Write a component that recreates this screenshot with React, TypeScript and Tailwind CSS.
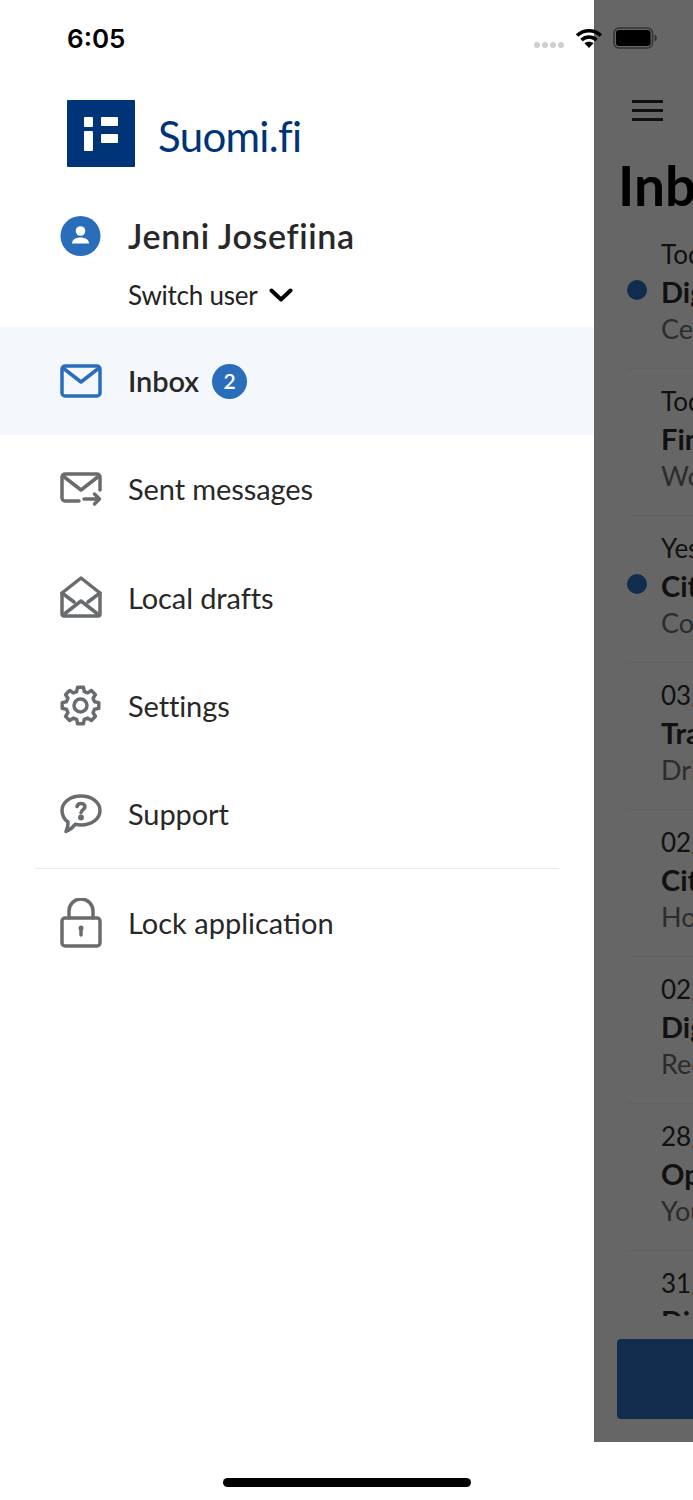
import type { ReactNode } from "react"

const gearPath = (() => {
  const pts: string[] = []
  const teeth = 8
  for (let i = 0; i < teeth; i++) {
    const a = (i * Math.PI * 2) / teeth
    const step = (Math.PI * 2) / teeth
    const pairs: [number, number][] = [
      [14.5, a - step * 0.34],
      [18.5, a - step * 0.2],
      [18.5, a + step * 0.2],
      [14.5, a + step * 0.34],
    ]
    pairs.forEach(([r, t]) => {
      const x = 20.5 + r * Math.sin(t)
      const y = 20.5 - r * Math.cos(t)
      pts.push(`${x.toFixed(2)} ${y.toFixed(2)}`)
    })
  }
  return `M${pts.join("L")}Z`
})()

function Icon({ children, h = 42 }: { children: ReactNode; h?: number }) {
  return (
    <svg width="42" height={h} viewBox={`0 0 42 ${h}`} fill="none" stroke="currentColor" strokeWidth="3.5" strokeLinejoin="round" strokeLinecap="round" className="shrink-0">
      {children}
    </svg>
  )
}

const rows = [
  {
    label: "Sent messages",
    icon: (
      <Icon>
        <path d="M19 33H5a3 3 0 0 1-3-3V9a3 3 0 0 1 3-3h32a3 3 0 0 1 3 3v13" />
        <path d="M3 8l18 14L39 8" />
        <path d="M24 31h15.500M34.500 26l5 5-5 5" />
      </Icon>
    ),
  },
  {
    label: "Local drafts",
    icon: (
      <Icon>
        <path d="M2 17L21 2l19 15v21a2 2 0 0 1-2 2H4a2 2 0 0 1-2-2z" />
        <path d="M2 17l12 9M40 17l-12 9M3 39l18-14 18 14" />
      </Icon>
    ),
  },
  {
    label: "Settings",
    icon: (
      <Icon>
        <path d={gearPath} />
        <circle cx="20.500" cy="20.500" r="6.500" />
      </Icon>
    ),
  },
  {
    label: "Support",
    icon: (
      <Icon>
        <path d="M21 3c10.500 0 19 6 19 14.500S31.500 32 21 32c-2 0-4-.2-5.800-.7C13 34.500 9.500 37 6 38.500c1.500-3 2.200-6.500 2-9.500C4.500 26.500 2 22.500 2 17.500 2 9 10.500 3 21 3z" />
        <path d="M17 13.500c.5-2 2-3 4-3 2.300 0 4 1.300 4 3.300 0 2.700-4 3-4 6" />
        <circle cx="21" cy="24.500" r="1.200" fill="currentColor" />
      </Icon>
    ),
  },
]

const messages = [
  { date: "Today", title: "Digital services", text: "Certificate", unread: true },
  { date: "Today", title: "Financial aid", text: "Work permit", unread: false },
  { date: "Yesterday", title: "City of Tampere", text: "Commuter ticket", unread: true },
  { date: "03/02/2020", title: "Transport Agency", text: "Driving licence", unread: false },
  { date: "02/02/2020", title: "City of Espoo", text: "Housing", unread: false },
  { date: "02/02/2020", title: "Digital agency", text: "Receipt", unread: false },
  { date: "28/01/2020", title: "Open services", text: "Your request", unread: false },
  { date: "31/12/2019", title: "Digital agency", text: "Reminder", unread: false },
]

export default function App() {
  return (
    <div className="relative h-[1500px] w-[693px] overflow-hidden bg-white font-['Lato',sans-serif]">
      <div className="flex h-[1442px] w-[1188px]">
        {/* Drawer */}
        <div className="w-[594px] shrink-0 bg-white">
          <div className="pl-[67px] pt-[100px]">
            <div className="flex items-center gap-[23px]">
              <svg width="68" height="67" viewBox="0 0 68 67" className="shrink-0">
                <rect width="68" height="67" rx="1" fill="#003479" />
                <rect x="17" y="17" width="9" height="10" rx="1" fill="#fff" />
                <rect x="17" y="31" width="9" height="20" rx="1" fill="#fff" />
                <rect x="34" y="17" width="17" height="9" rx="1" fill="#fff" />
                <rect x="34" y="34" width="17" height="9" rx="1" fill="#fff" />
              </svg>
              <span className="pt-[4px] text-[42px] leading-[50px] tracking-[-0.7px] text-[#003479]">Suomi.fi</span>
            </div>
          </div>
          <div className="mt-[49px] flex items-center gap-[27px] pl-[60px]">
            <svg width="41" height="40" viewBox="0 0 41 40" className="shrink-0">
              <circle cx="20.500" cy="20" r="20" fill="#2a6ebb" />
              <circle cx="20.500" cy="15" r="4.800" fill="#fff" />
              <path d="M12 27.500c0-4 4-6 8.500-6s8.500 2 8.500 6z" fill="#fff" />
            </svg>
            <span className="text-[34px] font-semibold leading-[40px] tracking-[0.65px] text-[#282828]">Jenni Josefiina</span>
          </div>
          <div className="mt-[19px] flex h-[40px] items-center gap-[12px] pl-[128px]">
            <span className="text-[26px] leading-[40px] tracking-[-0.25px] text-[#222]">Switch user</span>
            <svg width="24" height="14" viewBox="0 0 24 14" fill="none" stroke="#000" strokeWidth="4" strokeLinecap="round" strokeLinejoin="round">
              <path d="M2.500 2.500L12 11.500l9.500-9" />
            </svg>
          </div>
          <div className="mt-[12px]">
            <div className="flex h-[108px] items-center gap-[26px] bg-[#f4f7fc] pl-[60px] text-[#2a6ebb]">
              <Icon>
                <path d="M5 6h32a3 3 0 0 1 3 3v24a3 3 0 0 1-3 3H5a3 3 0 0 1-3-3V9a3 3 0 0 1 3-3z" />
                <path d="M3 8l18 14L39 8" />
              </Icon>
              <div className="flex items-center gap-[13px]">
                <span className="text-[29px] font-semibold tracking-[-0.1px] text-[#282828]">Inbox</span>
                <span className="flex h-[35px] w-[35px] items-center justify-center rounded-full bg-[#2a6ebb] text-[21px] font-semibold text-white">2</span>
              </div>
            </div>
            {rows.map((row) => (
              <div key={row.label} className="flex h-[108.300px] items-center gap-[26px] pl-[60px] text-[#696c6f]">
                {row.icon}
                <span className="text-[29px] tracking-[-0.1px] text-[#282828]">{row.label}</span>
              </div>
            ))}
            <div className="mx-[35px] h-px bg-[#eaeaea]" />
            <div className="flex h-[108px] items-center gap-[26px] pl-[60px] text-[#696c6f]">
              <Icon h={50}>
                <path d="M9 20v-7a12 12 0 0 1 24 0v7" />
                <rect x="2" y="20" width="38" height="28" rx="3" />
                <circle cx="21" cy="30" r="2.500" fill="currentColor" stroke="none" />
                <path d="M21 31v6" />
              </Icon>
              <span className="text-[29px] text-[#282828]">Lock application</span>
            </div>
          </div>
        </div>

        {/* Dimmed inbox behind the drawer */}
        <div className="flex w-[594px] shrink-0 flex-col bg-[#666666] text-[#111]">
          <div className="pl-[38px] pt-[100px]">
            <div className="flex h-[21px] w-[31px] flex-col justify-between">
              <div className="h-[3px] bg-[#111]" />
              <div className="h-[3px] bg-[#111]" />
              <div className="h-[3px] bg-[#111]" />
            </div>
          </div>
          <h1 className="mt-[29px] pl-[24px] text-[55px] font-bold leading-[70px] text-black">Inbox</h1>
          <div className="mt-[2px] h-[1094px] overflow-hidden pl-[34px]">
            {messages.map((m) => (
              <div key={m.title + m.date} className="relative h-[147px] border-b border-[#606060] pl-[33px] pt-[14px]">
                {m.unread && <span className="absolute left-[-1px] top-[58px] h-[20px] w-[20px] rounded-full bg-[#122c4d]" />}
                <div className="whitespace-nowrap text-[26px] leading-[37px]">{m.date}</div>
                <div className="whitespace-nowrap text-[29px] font-bold leading-[37px]">{m.title}</div>
                <div className="whitespace-nowrap text-[27px] leading-[37px] text-[#2c2c2c]">{m.text}</div>
              </div>
            ))}
          </div>
          <div className="ml-[23px] mt-[23px] h-[80px] w-[540px] rounded-[4px] bg-[#122c4d]" />
        </div>
      </div>

      {/* Status bar */}
      <span className="absolute left-[67px] top-[22px] font-['Inter',sans-serif] text-[26px] font-semibold leading-[34px] text-black">6:05</span>
      <div className="absolute left-[534px] top-[42px] flex gap-[2px]">
        <span className="h-[6px] w-[6px] rounded-full bg-[#cfcfcf]" />
        <span className="h-[6px] w-[6px] rounded-full bg-[#cfcfcf]" />
        <span className="h-[6px] w-[6px] rounded-full bg-[#cfcfcf]" />
        <span className="h-[6px] w-[6px] rounded-full bg-[#cfcfcf]" />
      </div>
      <svg className="absolute left-[575px] top-[27px]" width="28" height="21" viewBox="0 0 28 21" fill="none" stroke="#000" strokeWidth="3.500">
        <path d="M2 8.500c7-6.500 17-6.500 24 0" />
        <path d="M6.500 13c4.500-4 10.500-4 15 0" />
        <path d="M14 21l-4.500-4.800c2.500-2 6.500-2 9 0z" fill="#000" stroke="none" />
      </svg>
      <svg className="absolute left-[613px] top-[27px]" width="44" height="22" viewBox="0 0 44 22">
        <rect x="1" y="1" width="38.500" height="20" rx="5" fill="none" stroke="#333" strokeWidth="1.500" />
        <rect x="3" y="3" width="34.500" height="16" rx="3" fill="#000" />
        <path d="M41.500 7.500c1.500.5 2.300 2 2.300 3.500s-.8 3-2.300 3.500z" fill="#333" />
      </svg>

      {/* Home indicator */}
      <div className="absolute left-[223px] top-[1478px] h-[9px] w-[248px] rounded-full bg-black" />
    </div>
  )
}
